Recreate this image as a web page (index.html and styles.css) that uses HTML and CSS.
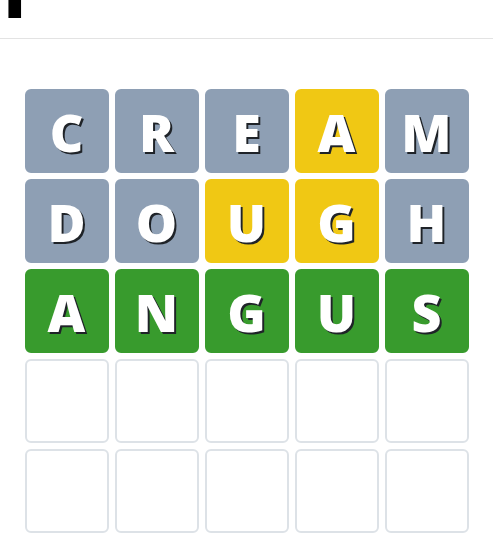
FILE: index.html
```html
<!DOCTYPE html>
<html lang="en">
<head>
  <meta charset="UTF-8" />
  <meta name="viewport" content="width=device-width, initial-scale=1.0"/>
  <title>Word Guess</title>
  <link rel="stylesheet" href="styles.css">
</head>
<body>
  <header class="top-bar">
    <h1>prune name</h1>
  </header>

  <div class="board">
    <div class="row">
      <div class="tile absent">C</div>
      <div class="tile absent">R</div>
      <div class="tile absent">E</div>
      <div class="tile present">A</div>
      <div class="tile absent">M</div>
    </div>
    <div class="row">
      <div class="tile absent">D</div>
      <div class="tile absent">O</div>
      <div class="tile present">U</div>
      <div class="tile present">G</div>
      <div class="tile absent">H</div>
    </div>
    <div class="row">
      <div class="tile correct">A</div>
      <div class="tile correct">N</div>
      <div class="tile correct">G</div>
      <div class="tile correct">U</div>
      <div class="tile correct">S</div>
    </div>
    <div class="row">
      <div class="tile"></div>
      <div class="tile"></div>
      <div class="tile"></div>
      <div class="tile"></div>
      <div class="tile"></div>
    </div>
    <div class="row">
      <div class="tile"></div>
      <div class="tile"></div>
      <div class="tile"></div>
      <div class="tile"></div>
      <div class="tile"></div>
    </div>
  </div>
</body>
</html>
```

FILE: styles.css
```css
body {
  margin: 0;
  background: #fff;
  font-family: 'Open Sans', sans-serif;
  overflow: hidden;
}

.top-bar {
  height: 38px;
  overflow: hidden;
  border-bottom: 1px solid #e3e3e3;
  padding-left: 2px;
}

.top-bar h1 {
  margin: -79px 0 0;
  font-family: 'Liberation Sans', sans-serif;
  font-size: 92px;
  line-height: 1;
  font-weight: 900;
  color: #000;
  white-space: nowrap;
  letter-spacing: 2px;
}

.board {
  display: flex;
  flex-direction: column;
  gap: 6px;
  width: 444px;
  margin: 50px auto 0;
}

.row {
  display: grid;
  grid-template-columns: repeat(5, 84px);
  gap: 6px;
}

.tile {
  height: 84px;
  box-sizing: border-box;
  border: 2px solid #dde2e7;
  border-radius: 6px;
  display: flex;
  align-items: center;
  justify-content: center;
  font-size: 52px;
  font-weight: 800;
  color: #fff;
  text-shadow: 2px 2px 0 #1f2328;
}

.absent {
  background: #8e9fb4;
  border-color: #8e9fb4;
}

.present {
  background: #f0c814;
  border-color: #f0c814;
}

.correct {
  background: #389b2d;
  border-color: #389b2d;
}
```
